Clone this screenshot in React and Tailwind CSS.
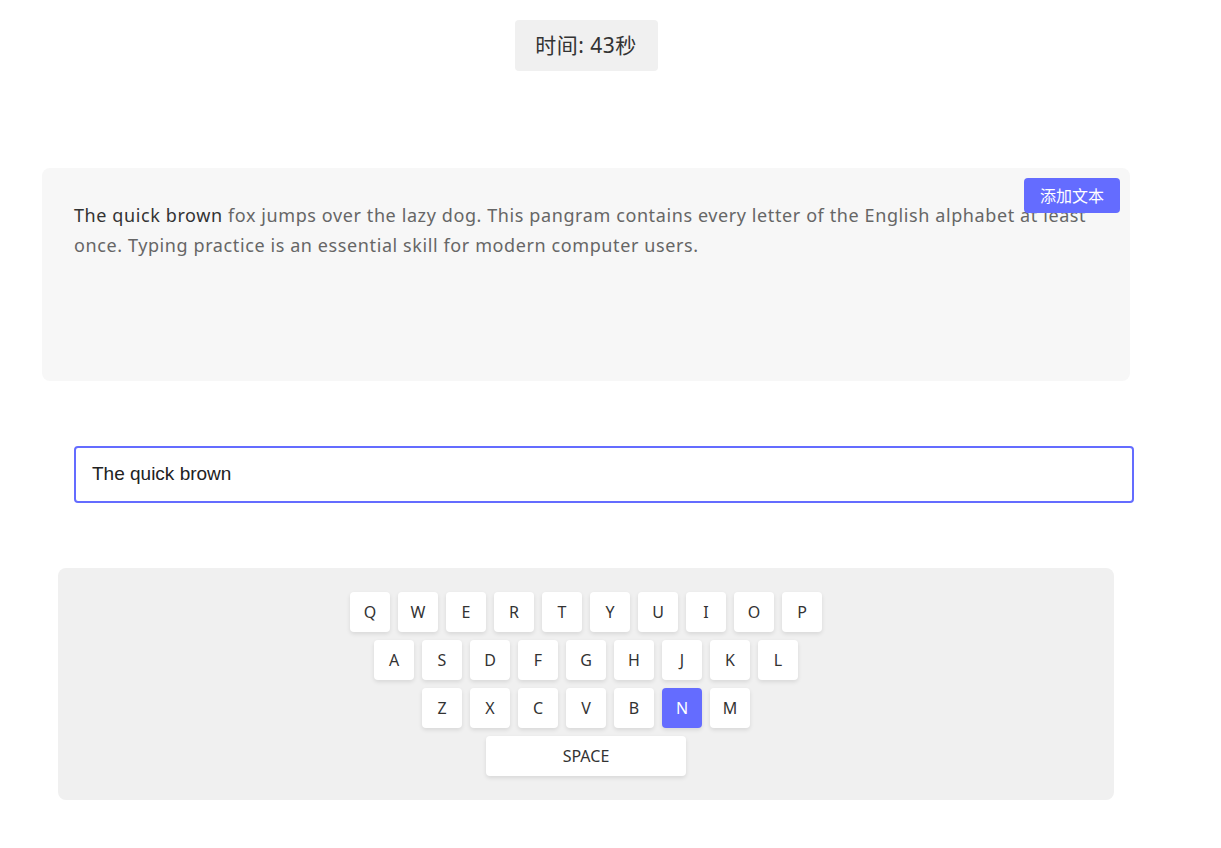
import React from "react";

const rows = [
  ["Q", "W", "E", "R", "T", "Y", "U", "I", "O", "P"],
  ["A", "S", "D", "F", "G", "H", "J", "K", "L"],
  ["Z", "X", "C", "V", "B", "N", "M"],
];

const font = { fontFamily: '"Noto Sans", "Noto Sans CJK SC", sans-serif' };

export default function App() {
  return (
    <div className="bg-white min-h-[848px] w-[1221px]" style={font}>
      <div className="w-[1088px] ml-[42px] pt-[20px]">
        <div className="flex justify-center">
          <div className="bg-[#f0f0f0] rounded-[4px] h-[51px] w-[143px] flex items-center justify-center text-[21px] tracking-[0.5px] text-[#333]">
            时间: 43秒
          </div>
        </div>

        <div className="relative mt-[97px] h-[213px] bg-[#f7f7f7] rounded-[8px] p-8 text-[18px] leading-[30px] tracking-[0.6px]">
          <button className="absolute top-[10px] right-[10px] h-[35px] px-4 bg-[#646cff] text-white text-[16px] tracking-normal rounded-[4px] flex items-center">
            添加文本
          </button>
          <p>
            <span className="text-[#333]">The quick brown</span>
            <span className="text-[#666]"> fox jumps over the lazy dog. This pangram contains every letter of the English alphabet at least once. Typing practice is an essential skill for modern computer users.</span>
          </p>
        </div>

        <div className="mt-[33px] p-8">
          <div className="w-[1060px] h-[57px] border-2 border-[#646cff] rounded-[4px] px-4 flex items-center text-[19px] text-[#222]" style={{ fontFamily: '"Liberation Sans", Arial, sans-serif' }}>
            The quick brown
          </div>
        </div>

        <div className="mx-4 mt-[33px] bg-[#f0f0f0] rounded-[8px] py-6 flex flex-col items-center gap-2">
          {rows.map((row, i) => (
            <div key={i} className="flex gap-2">
              {row.map((k) => (
                <div
                  key={k}
                  className={
                    k === "N"
                      ? "w-10 h-10 rounded-[4px] bg-[#646cff] text-white flex items-center justify-center text-[16px] shadow-[0_2px_4px_rgba(0,0,0,0.1)]"
                      : "w-10 h-10 rounded-[4px] bg-white text-[#333] flex items-center justify-center text-[16px] shadow-[0_2px_4px_rgba(0,0,0,0.1)]"
                  }
                >
                  {k}
                </div>
              ))}
            </div>
          ))}
          <div className="w-[200px] h-10 rounded-[4px] bg-white text-[#333] flex items-center justify-center text-[16px] shadow-[0_2px_4px_rgba(0,0,0,0.1)]">
            SPACE
          </div>
        </div>
      </div>
    </div>
  );
}
